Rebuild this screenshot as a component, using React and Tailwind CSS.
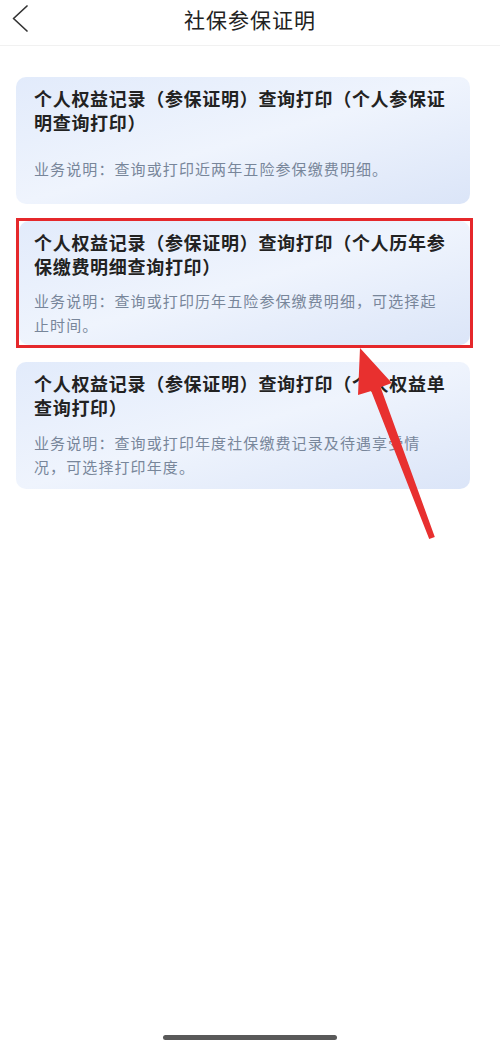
const cards = [
    {
        title: '个人权益记录（参保证明）查询打印（个人参保证明查询打印）',
        desc: '业务说明：查询或打印近两年五险参保缴费明细。',
        descGap: 'mt-[23px]',
        pad: 'pl-[18px] pb-[23px]',
    },
    {
        title: '个人权益记录（参保证明）查询打印（个人历年参保缴费明细查询打印）',
        desc: '业务说明：查询或打印历年五险参保缴费明细，可选择起止时间。',
        descGap: 'mt-[11px]',
        pad: 'pl-[15px] pb-[8px]',
        marked: true,
    },
    {
        title: '个人权益记录（参保证明）查询打印（个人权益单查询打印）',
        desc: '业务说明：查询或打印年度社保缴费记录及待遇享受情况，可选择打印年度。',
        descGap: 'mt-[12px]',
        pad: 'pl-[18px] pb-[10px]',
    },
];

const Card = ({ title, desc, descGap, pad }) => (
    <div className={`rounded-[10px] bg-linear-to-br from-[#e2ebfb] via-[#eff4fd] to-[#dbe5f8] pr-[20px] pt-[9px] ${pad}`}>
        <div className="text-[18px] leading-[24px] font-bold tracking-[0.7px] text-[#222]">{title}</div>
        <div className={`${descGap} text-[15px] leading-[24px] tracking-[1.1px] text-[#78869a]`}>{desc}</div>
    </div>
);

export default function App() {
    return (
        <div className="relative min-h-[1048px] w-[500px] bg-white font-['Noto_Sans_CJK_SC','Noto_Sans',sans-serif]">
            {/* Header */}
            <div className="relative flex h-[46px] items-center justify-center border-b border-[#f1f1f1] pb-[6px]">
                <svg className="absolute left-0 top-0" width="40" height="40" viewBox="0 0 40 40">
                    <polyline points="27,6 13.5,18.5 27,31" fill="none" stroke="#333" strokeWidth="1.7" strokeLinecap="round" strokeLinejoin="round" />
                </svg>
                <div className="text-[21px] tracking-[1px] text-[#222]">社保参保证明</div>
            </div>

            <div className="flex flex-col gap-[14px] pl-[16px] pr-[30px] pt-[31px]">
                {cards.map((c, i) =>
                    c.marked ? (
                        <div key={i} className="-mr-[3px] border-[3px] border-[#e5282b]">
                            <Card {...c} />
                        </div>
                    ) : (
                        <Card key={i} {...c} />
                    )
                )}
            </div>

            {/* red arrow */}
            <svg className="pointer-events-none absolute left-0 top-0" width="500" height="1048">
                <polygon
                    points="360,348 391.8,383.1 380.6,387.3 434.8,536.9 429.2,539.1 371.2,390.9 358,395.1"
                    fill="#e8302f"
                />
            </svg>

            {/* home indicator */}
            <div className="absolute bottom-[8px] left-[163px] h-[5px] w-[174px] rounded-full bg-[#595959]" />
        </div>
    );
}
